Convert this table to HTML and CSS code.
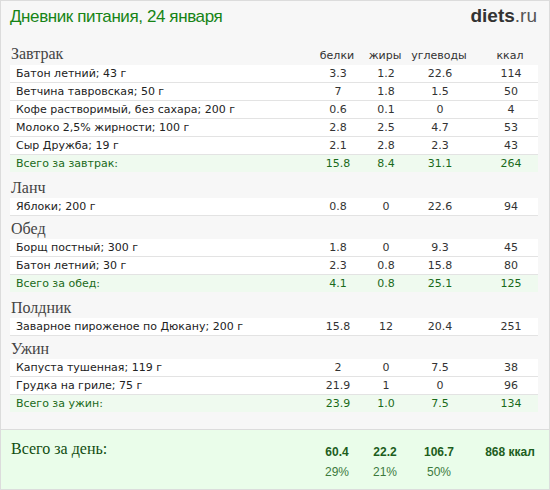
FILE: index.html
```html
<!DOCTYPE html>
<html lang="ru">
<head>
<meta charset="utf-8">
<title>Дневник питания</title>
<link rel="stylesheet" href="styles.css">
</head>
<body>
<div class="page">
  <header class="top">
    <h1 class="title">Дневник питания, 24 января</h1>
    <div class="logo"><b>diets</b><span>.ru</span></div>
  </header>

  <div class="meals">
    <section class="meal">
      <div class="meal-head">
        <span class="meal-name">Завтрак</span>
        <span class="col">белки</span><span class="col">жиры</span><span class="col">углеводы</span><span class="col kcal">ккал</span>
      </div>
      <div class="row"><span class="name">Батон летний; 43 г</span><span class="num">3.3</span><span class="num">1.2</span><span class="num">22.6</span><span class="num kcal">114</span></div>
      <div class="row"><span class="name">Ветчина тавровская; 50 г</span><span class="num">7</span><span class="num">1.8</span><span class="num">1.5</span><span class="num kcal">50</span></div>
      <div class="row"><span class="name">Кофе растворимый, без сахара; 200 г</span><span class="num">0.6</span><span class="num">0.1</span><span class="num">0</span><span class="num kcal">4</span></div>
      <div class="row"><span class="name">Молоко 2,5% жирности; 100 г</span><span class="num">2.8</span><span class="num">2.5</span><span class="num">4.7</span><span class="num kcal">53</span></div>
      <div class="row"><span class="name">Сыр Дружба; 19 г</span><span class="num">2.1</span><span class="num">2.8</span><span class="num">2.3</span><span class="num kcal">43</span></div>
      <div class="row total"><span class="name">Всего за завтрак:</span><span class="num">15.8</span><span class="num">8.4</span><span class="num">31.1</span><span class="num kcal">264</span></div>
    </section>

    <section class="meal">
      <div class="meal-head"><span class="meal-name">Ланч</span></div>
      <div class="row"><span class="name">Яблоки; 200 г</span><span class="num">0.8</span><span class="num">0</span><span class="num">22.6</span><span class="num kcal">94</span></div>
    </section>

    <section class="meal">
      <div class="meal-head"><span class="meal-name">Обед</span></div>
      <div class="row"><span class="name">Борщ постный; 300 г</span><span class="num">1.8</span><span class="num">0</span><span class="num">9.3</span><span class="num kcal">45</span></div>
      <div class="row"><span class="name">Батон летний; 30 г</span><span class="num">2.3</span><span class="num">0.8</span><span class="num">15.8</span><span class="num kcal">80</span></div>
      <div class="row total"><span class="name">Всего за обед:</span><span class="num">4.1</span><span class="num">0.8</span><span class="num">25.1</span><span class="num kcal">125</span></div>
    </section>

    <section class="meal">
      <div class="meal-head"><span class="meal-name">Полдник</span></div>
      <div class="row"><span class="name">Заварное пироженое по Дюкану; 200 г</span><span class="num">15.8</span><span class="num">12</span><span class="num">20.4</span><span class="num kcal">251</span></div>
    </section>

    <section class="meal">
      <div class="meal-head"><span class="meal-name">Ужин</span></div>
      <div class="row"><span class="name">Капуста тушенная; 119 г</span><span class="num">2</span><span class="num">0</span><span class="num">7.5</span><span class="num kcal">38</span></div>
      <div class="row"><span class="name">Грудка на гриле; 75 г</span><span class="num">21.9</span><span class="num">1</span><span class="num">0</span><span class="num kcal">96</span></div>
      <div class="row total"><span class="name">Всего за ужин:</span><span class="num">23.9</span><span class="num">1.0</span><span class="num">7.5</span><span class="num kcal">134</span></div>
    </section>
  </div>

  <footer class="day">
    <div class="day-grid">
      <span class="day-name">Всего за день:</span>
      <span class="day-num">60.4</span><span class="day-num">22.2</span><span class="day-num">106.7</span><span class="day-num kcal">868 ккал</span>
      <span></span>
      <span class="pct">29%</span><span class="pct">21%</span><span class="pct">50%</span><span></span>
    </div>
  </footer>
</div>
</body>
</html>
```

FILE: styles.css
```css
* { box-sizing: border-box; }
html, body { margin: 0; padding: 0; }
body { background: #fff; }

.page {
  width: 550px;
  height: 490px;
  border: 1px solid #dcdcdc;
  background: #f7f7f7;
  display: flex;
  flex-direction: column;
}

.top {
  height: 41px;
  padding: 5px 12px 0 9px;
  display: flex;
  justify-content: space-between;
  align-items: baseline;
}
.title {
  margin: 0;
  font: normal 17px/20px "Liberation Sans", Arial, sans-serif;
  letter-spacing: -0.4px;
  color: #168416;
}
.logo {
  font: 19px/20px "Liberation Sans", Arial, sans-serif;
  color: #3a3a3a;
}
.logo b { font-weight: bold; color: #333; }
.logo span { color: #555; }

.meals { padding: 0 11px 0 9px; }

.meal-head, .row, .day-grid {
  display: grid;
  grid-template-columns: 1fr 48px 48px 60px 69px;
}
.meal-head {
  height: 23px;
  padding-top: 4px;
  align-items: baseline;
}
.meal:first-child .meal-head { padding-top: 3px; }
.meal-name {
  font: 16px/18px "Liberation Serif", "Times New Roman", serif;
  color: #444;
  padding-left: 1px;
}
.col {
  font: 11px/14px "DejaVu Sans", Verdana, sans-serif;
  color: #333;
  text-align: center;
}
.kcal { padding-left: 13px; }

.row {
  height: 18px;
  background: #fff;
  border-bottom: 1px solid #e3e3e3;
  font: 11px/17px "DejaVu Sans", Verdana, sans-serif;
  color: #222;
}
.name { padding-left: 6px; white-space: nowrap; }
.num { text-align: center; padding-left: 2px; color: #333; }
.row .num.kcal { padding-left: 15px; }

.row.total {
  height: 17px;
  border-bottom: 0;
  margin-bottom: 3px;
  background: #effaef;
  color: #1a6a1a;
}
.row.total .num { color: #1a6a1a; }

.day {
  margin-top: auto;
  height: 60px;
  border-top: 1px solid #dcdcdc;
  background: #eafdea;
  padding: 12px 11px 0 9px;
}
.day-grid {
  align-items: baseline;
  grid-auto-rows: 20px;
}
.day-name {
  align-self: start;
  font: 16px/14px "Liberation Serif", "Times New Roman", serif;
  color: #114d11;
  padding-left: 1px;
}
.day-num {
  font: bold 12px/20px "Liberation Sans", Arial, sans-serif;
  color: #1d5e1d;
  text-align: center;
}
.pct {
  font: 12px/20px "Liberation Sans", Arial, sans-serif;
  color: #3d7a3d;
  text-align: center;
}
```
